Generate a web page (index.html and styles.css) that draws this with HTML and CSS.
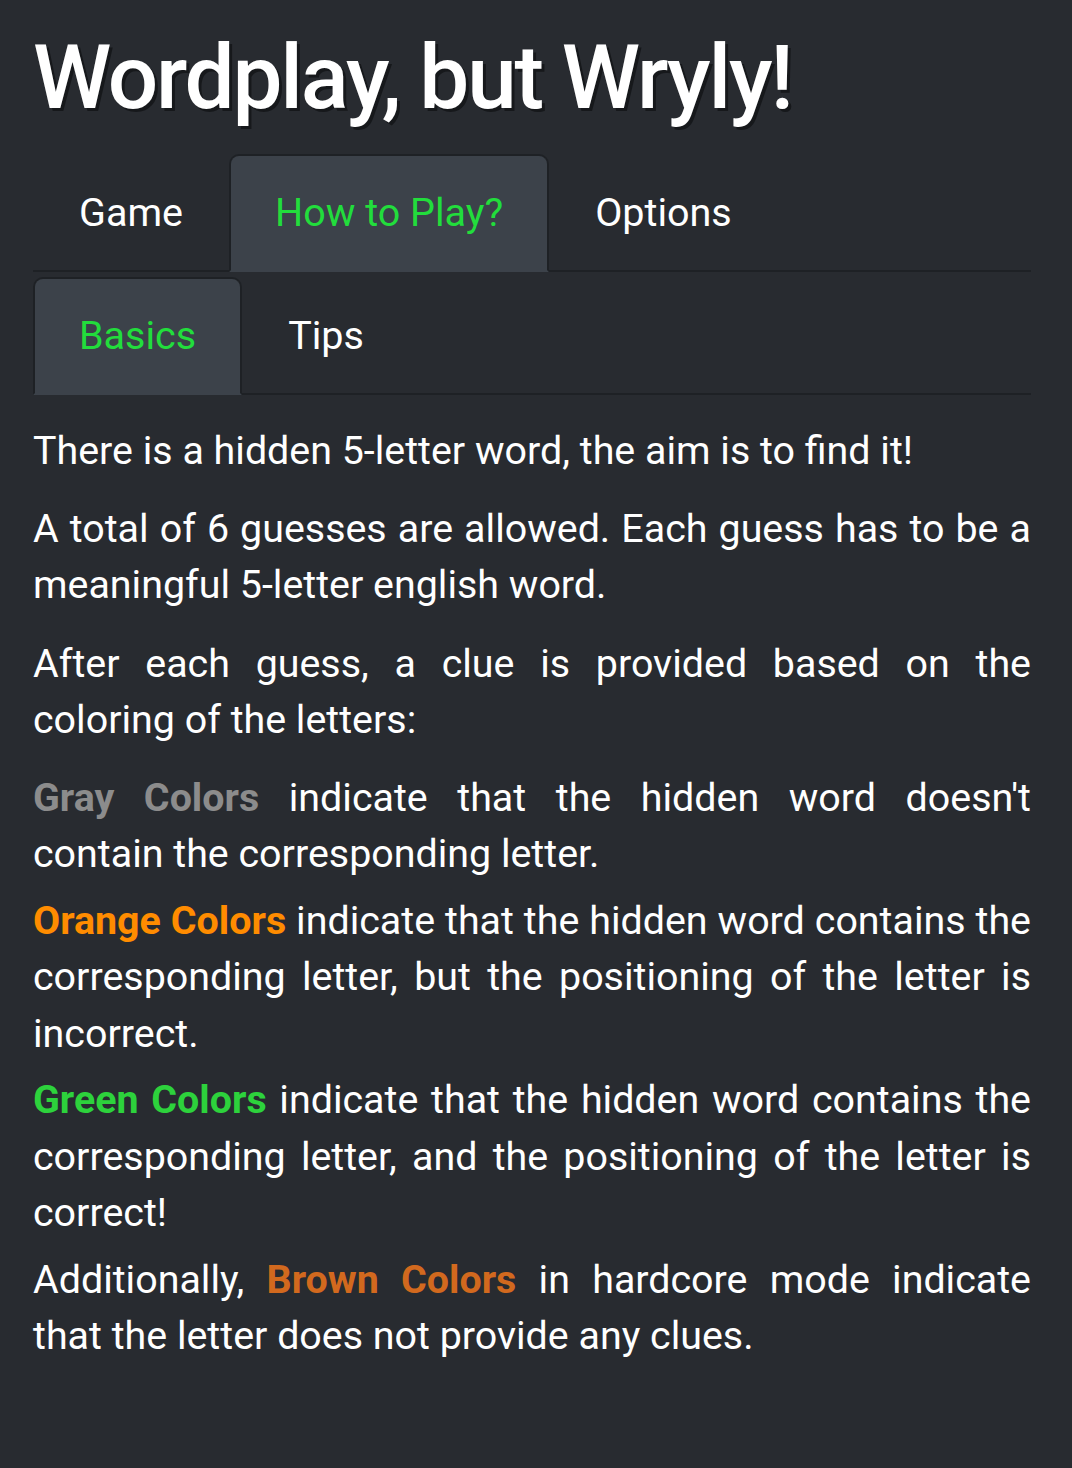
FILE: index.html
```html
<!DOCTYPE html>
<html lang="en">
<head>
<meta charset="utf-8">
<title>Wordplay, but Wryly!</title>
<link rel="stylesheet" href="styles.css">
</head>
<body>
<main class="page">
  <h1 class="title">Wordplay, but Wryly!</h1>
  <nav class="tabs">
    <a class="tab">Game</a>
    <a class="tab active">How to Play?</a>
    <a class="tab">Options</a>
  </nav>
  <nav class="tabs sub">
    <a class="tab active">Basics</a>
    <a class="tab">Tips</a>
  </nav>
  <section class="content">
    <p class="para">There is a hidden 5-letter word, the aim is to find it!</p>
    <p class="para">A total of 6 guesses are allowed. Each guess has to be a meaningful 5-letter english word.</p>
    <p class="para">After each guess, a clue is provided based on the coloring of the letters:</p>
    <p class="para tight"><b class="c-gray">Gray Colors</b> indicate that the hidden word doesn't contain the corresponding letter.</p>
    <p class="para tight"><b class="c-orange">Orange Colors</b> indicate that the hidden word contains the corresponding letter, but the positioning of the letter is incorrect.</p>
    <p class="para tight"><b class="c-green">Green Colors</b> indicate that the hidden word contains the corresponding letter, and the positioning of the letter is correct!</p>
    <p class="para tight">Additionally, <b class="c-brown">Brown Colors</b> in hardcore mode indicate that the letter does not provide any clues.</p>
  </section>
</main>
</body>
</html>
```

FILE: styles.css
```css
html, body {
  margin: 0;
  padding: 0;
  background: #282b30;
}
body {
  font-family: Roboto, "Noto Sans", sans-serif;
  color: #ffffff;
}
.page {
  width: 998px;
  padding: 0 0 0 33px;
}
.title {
  margin: 25px 0 22px 0;
  font-size: 89px;
  font-weight: 500;
  line-height: 1.2;
  letter-spacing: -2.2px;
  text-shadow: 3px 3px 0 #16181b;
}
.tabs {
  display: flex;
  border-bottom: 2px solid #1e2125;
}
.tabs.sub {
  margin-top: 5px;
}
.tab {
  display: flex;
  align-items: center;
  height: 114px;
  padding: 0 44px;
  margin-bottom: -2px;
  border: 2px solid transparent;
  border-radius: 10px 10px 0 0;
  font-size: 39.5px;
  color: #ffffff;
  box-sizing: content-box;
}
.tab.active {
  background: #3c424a;
  border-color: #1e2125 #1e2125 transparent #1e2125;
  color: #22dd3c;
}
.tab.last-pad {
  padding-left: 48px;
}
.content {
  padding-top: 28px;
}
.para {
  margin: 0 0 22px 0;
  font-size: 39.4px;
  line-height: 56.25px;
  text-align: justify;
}
.para.tight {
  margin-bottom: 10.5px;
}
.para b {
  font-weight: 700;
}
.c-gray { color: #8c8c8c; }
.c-orange { color: #ff8c00; }
.c-green { color: #2dd23c; }
.c-brown { color: #d2691e; }
```
